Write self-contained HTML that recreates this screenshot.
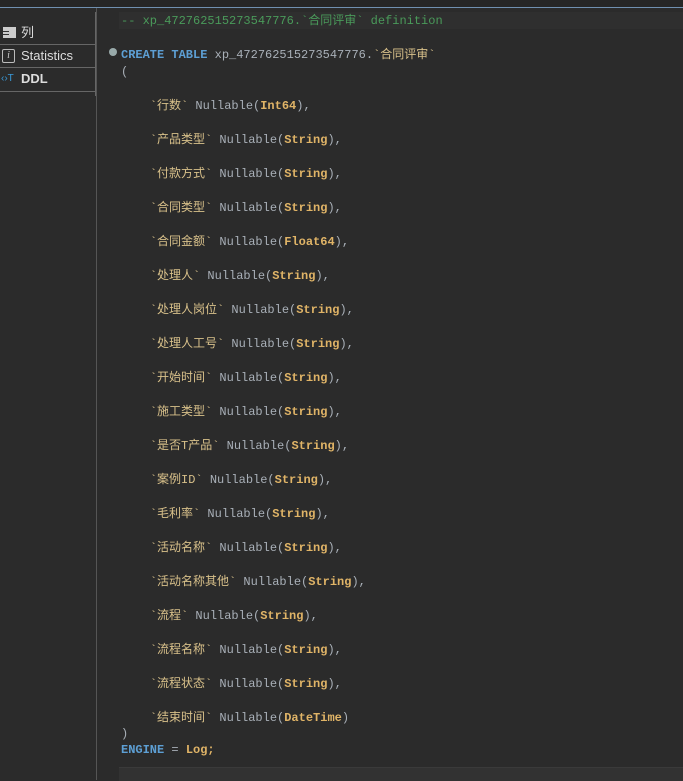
<!DOCTYPE html>
<html><head><meta charset="utf-8"><style>
body{margin:0;width:683px;height:780px;background:#2b2b2b;overflow:hidden;position:relative;font-family:"Liberation Mono","Noto Sans CJK SC",monospace;}
.top{position:absolute;left:0;top:0;width:683px;height:7px;background:#262626;border-bottom:1px solid #7090b0}
.left{position:absolute;left:0;top:8px;width:96px;height:772px;background:#2b2b2b;border-right:1px solid #555}
.tab{position:absolute;left:0;width:96px;height:22px;font:13px "Liberation Sans","Noto Sans CJK SC",sans-serif;color:#ddd;line-height:22px}
.tab span{position:absolute;left:21px}
.l{position:absolute;left:121px;font-size:12px;white-space:pre;color:#a9b0b8;line-height:16px;margin-top:1px}
.k{color:#5d9fd4;font-weight:bold}
.t{color:#e0b467;font-weight:bold}
.n{color:#d8c08a}
.c{color:#4a9a5a}
</style></head><body>
<div class="top"></div>
<div class="left">
 <div style="position:absolute;left:95px;top:4px;height:84px;border-left:1px solid #666"></div>
 <div class="tab" style="top:14px;border-bottom:1px solid #666"><div style="position:absolute;left:3px;top:5px;width:13px;height:11px;background:#ccc"></div><div style="position:absolute;left:3px;top:9px;width:6px;height:1px;background:#333"></div><div style="position:absolute;left:3px;top:12px;width:6px;height:1px;background:#333"></div><span>列</span></div>
 <div class="tab" style="top:37px;border-bottom:1px solid #666"><div style="position:absolute;left:2px;top:4px;width:11px;height:12px;border:1px solid #bbb;border-radius:2px;font:italic 10px 'Liberation Serif';text-align:center;line-height:12px;color:#ccc">i</div><span>Statistics</span></div>
 <div class="tab" style="top:60px;font-weight:bold"><div style="position:absolute;left:1px;top:0;color:#3a9ad9;font-size:10px;font-weight:normal">‹›T</div><span>DDL</span></div>
 <div style="position:absolute;left:0;top:83px;width:96px;border-top:1px solid #666"></div>
</div>
<div style="position:absolute;left:119px;top:12px;width:564px;height:17px;background:#2f2f2f"></div>
<div class="l c" style="top:12px">-- xp_472762515273547776.`合同评审` definition</div>
<div style="position:absolute;left:109px;top:48px;width:8px;height:8px;border-radius:50%;background:#9aa"></div>
<div class="l" style="top:46px"><span class="k">CREATE TABLE</span> xp_472762515273547776.<span class="n">`合同评审`</span></div>
<div class="l" style="top:63px">(</div>
<div class="l" style="top:97px">    <span class="n">`行数`</span> Nullable(<span class="t">Int64</span>),</div>
<div class="l" style="top:131px">    <span class="n">`产品类型`</span> Nullable(<span class="t">String</span>),</div>
<div class="l" style="top:165px">    <span class="n">`付款方式`</span> Nullable(<span class="t">String</span>),</div>
<div class="l" style="top:199px">    <span class="n">`合同类型`</span> Nullable(<span class="t">String</span>),</div>
<div class="l" style="top:233px">    <span class="n">`合同金额`</span> Nullable(<span class="t">Float64</span>),</div>
<div class="l" style="top:267px">    <span class="n">`处理人`</span> Nullable(<span class="t">String</span>),</div>
<div class="l" style="top:301px">    <span class="n">`处理人岗位`</span> Nullable(<span class="t">String</span>),</div>
<div class="l" style="top:335px">    <span class="n">`处理人工号`</span> Nullable(<span class="t">String</span>),</div>
<div class="l" style="top:369px">    <span class="n">`开始时间`</span> Nullable(<span class="t">String</span>),</div>
<div class="l" style="top:403px">    <span class="n">`施工类型`</span> Nullable(<span class="t">String</span>),</div>
<div class="l" style="top:437px">    <span class="n">`是否T产品`</span> Nullable(<span class="t">String</span>),</div>
<div class="l" style="top:471px">    <span class="n">`案例ID`</span> Nullable(<span class="t">String</span>),</div>
<div class="l" style="top:505px">    <span class="n">`毛利率`</span> Nullable(<span class="t">String</span>),</div>
<div class="l" style="top:539px">    <span class="n">`活动名称`</span> Nullable(<span class="t">String</span>),</div>
<div class="l" style="top:573px">    <span class="n">`活动名称其他`</span> Nullable(<span class="t">String</span>),</div>
<div class="l" style="top:607px">    <span class="n">`流程`</span> Nullable(<span class="t">String</span>),</div>
<div class="l" style="top:641px">    <span class="n">`流程名称`</span> Nullable(<span class="t">String</span>),</div>
<div class="l" style="top:675px">    <span class="n">`流程状态`</span> Nullable(<span class="t">String</span>),</div>
<div class="l" style="top:709px">    <span class="n">`结束时间`</span> Nullable(<span class="t">DateTime</span>)</div>
<div class="l" style="top:725px">)</div>
<div class="l" style="top:741px"><span class="k">ENGINE</span> = <span class="t">Log;</span></div>
<div style="position:absolute;left:119px;top:767px;width:564px;height:13px;background:#323232;border-top:1px solid #3a3a3a"></div>
</body></html>
